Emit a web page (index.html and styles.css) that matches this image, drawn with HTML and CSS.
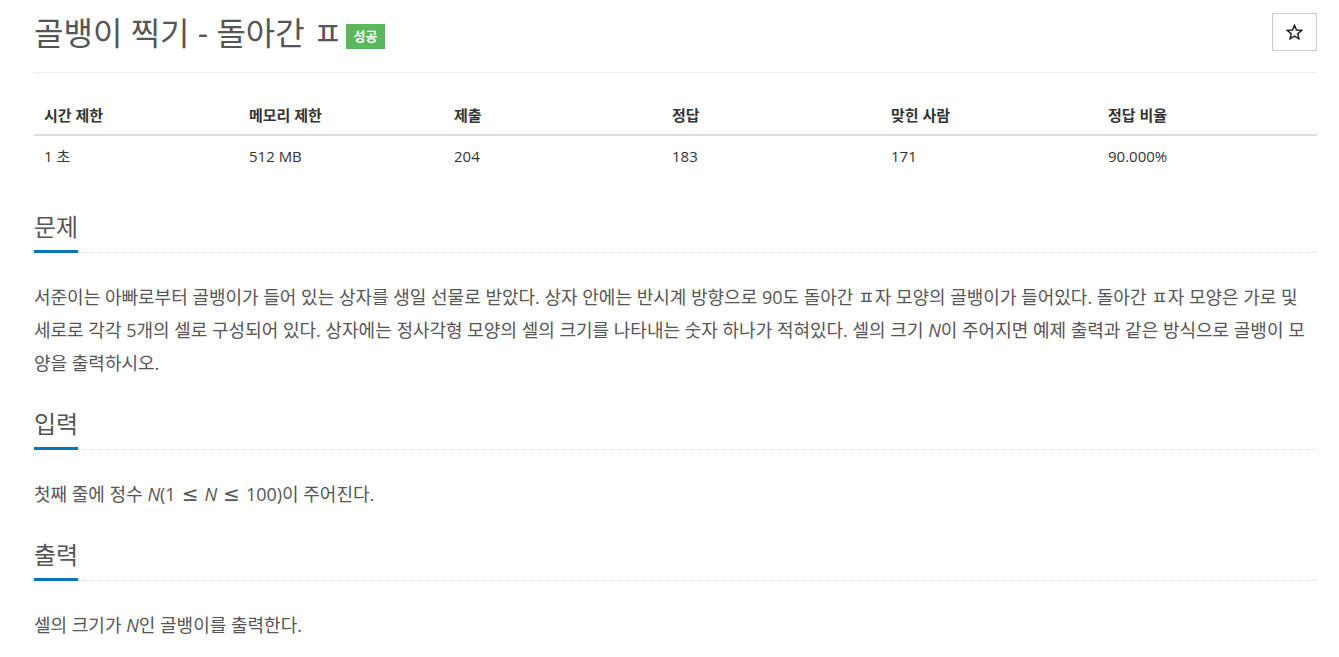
FILE: index.html
```html
<!DOCTYPE html>
<html lang="ko">
<head>
<meta charset="utf-8">
<title>골뱅이 찍기 - 돌아간 ㅍ</title>
<link rel="stylesheet" href="styles.css">
</head>
<body>
<div class="container">
  <div class="page-header">
    <h1 class="title">골뱅이 찍기 - 돌아간 ㅍ <span class="badge">성공</span></h1>
    <button class="star-btn" type="button" aria-label="즐겨찾기">
      <svg class="star-icon" width="17" height="16" viewBox="0 0 24 23" aria-hidden="true">
        <path d="M12 1.8 L14.9 8.6 L22.3 9.2 L16.7 14 L18.4 21.2 L12 17.4 L5.6 21.2 L7.3 14 L1.7 9.2 L9.1 8.6 Z" fill="none" stroke="#1a1a1a" stroke-width="2" stroke-linejoin="miter"/>
      </svg>
    </button>
  </div>

  <table class="info">
    <colgroup>
      <col class="c1"><col class="c2"><col class="c3"><col class="c4"><col class="c5"><col class="c6">
    </colgroup>
    <thead>
      <tr><th>시간 제한</th><th>메모리 제한</th><th>제출</th><th>정답</th><th>맞힌 사람</th><th>정답 비율</th></tr>
    </thead>
    <tbody>
      <tr><td>1 초</td><td>512 MB</td><td>204</td><td>183</td><td>171</td><td>90.000%</td></tr>
    </tbody>
  </table>

  <section class="section first">
    <div class="headline"><h2>문제</h2></div>
    <p class="text">서준이는 아빠로부터 골뱅이가 들어 있는 상자를 생일 선물로 받았다. 상자 안에는 반시계 방향으로 90도 돌아간 ㅍ자 모양의 골뱅이가 들어있다. 돌아간 ㅍ자 모양은 가로 및 세로로 각각 5개의 셀로 구성되어 있다. 상자에는 정사각형 모양의 셀의 크기를 나타내는 숫자 하나가 적혀있다. 셀의 크기 <i>N</i>이 주어지면 예제 출력과 같은 방식으로 골뱅이 모양을 출력하시오.</p>
  </section>

  <section class="section">
    <div class="headline"><h2>입력</h2></div>
    <p class="text">첫째 줄에 정수 <i>N</i>(1<span class="op">≤</span><i>N</i><span class="op">≤</span>100)이 주어진다.</p>
  </section>

  <section class="section">
    <div class="headline"><h2>출력</h2></div>
    <p class="text">셀의 크기가 <i>N</i>인 골뱅이를 출력한다.</p>
  </section>
</div>
</body>
</html>
```

FILE: styles.css
```css
html, body {
  margin: 0;
  padding: 0;
  background: #fff;
}

body {
  font-family: "Open Sans", "Noto Sans CJK KR", sans-serif;
  color: #555;
}

.container {
  padding: 0 22px 0 34px;
}

.page-header {
  display: flex;
  justify-content: space-between;
  align-items: flex-start;
  height: 73px;
  box-sizing: border-box;
  border-bottom: 1px solid #eee;
}

.title {
  margin: 13px 0 0 0;
  font-size: 32px;
  line-height: 40px;
  font-weight: 400;
  color: #555;
  display: flex;
  align-items: center;
}

.badge {
  display: inline-block;
  margin-left: 3px;
  background: #5cb85c;
  color: #fff;
  font-size: 13px;
  font-weight: 700;
  line-height: 25px;
  height: 25px;
  padding: 0 8px;
  position: relative;
  top: 3px;
}

.star-btn {
  margin-top: 13px;
  width: 45px;
  height: 38px;
  border: 1px solid #ccc;
  background: #fff;
  padding: 0;
  display: flex;
  align-items: center;
  justify-content: center;
}

.star-icon {
  display: block;
}

.info {
  margin-top: 22px;
  width: 100%;
  border-collapse: collapse;
  table-layout: fixed;
  font-size: 15px;
}

.c1 { width: 205px; }
.c2 { width: 205px; }
.c3 { width: 218px; }
.c4 { width: 219px; }
.c5 { width: 217px; }
.c6 { width: 219px; }

.info th {
  text-align: left;
  font-weight: 700;
  color: #333;
  padding: 10px 10px 9px;
  line-height: 20px;
  border-bottom: 2px solid #ddd;
}

.info td {
  color: #333;
  padding: 10px 10px;
  line-height: 20px;
}

.section {
  margin-top: 27px;
}

.section.first {
  margin-top: 34px;
}

.headline {
  border-bottom: 1px dotted #d6dde6;
  height: 42px;
}

.headline h2 {
  display: inline-block;
  margin: 0;
  font-size: 24px;
  line-height: 34px;
  font-weight: 400;
  color: #555;
  padding-bottom: 6px;
  border-bottom: 3px solid #0076c0;
}

.text {
  margin: 28px 0 0 0;
  font-size: 18px;
  line-height: 33px;
  color: #555;
}

.text i {
  font-style: italic;
}

.op {
  display: inline-block;
  font-size: 20px;
  margin: 0 6px;
  font-family: "DejaVu Sans", sans-serif;
}
```
